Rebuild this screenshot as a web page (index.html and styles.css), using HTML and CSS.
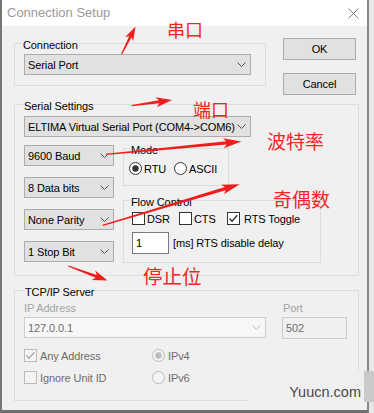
FILE: index.html
```html
<!DOCTYPE html>
<html>
<head>
<meta charset="utf-8">
<title>Connection Setup</title>
<link rel="stylesheet" href="styles.css">
</head>
<body>
<div class="win">
  <div class="titlebar">
    <span class="title">Connection Setup</span>
    <svg class="close" width="11" height="11" viewBox="0 0 11 11"><path d="M0.5 0.5L10.5 10.5M10.5 0.5L0.5 10.5" stroke="#7a7a7a" stroke-width="1" fill="none"/></svg>
  </div>
  <div class="client">
    <div class="toprow">
      <fieldset class="grp g-conn">
        <legend>Connection</legend>
        <div class="inner">
          <div class="combo w-conn"><span>Serial Port</span><svg class="chev" width="9" height="5" viewBox="0 0 9 5"><path d="M0.5 0.5L4.5 4.5L8.5 0.5" fill="none" stroke="#505050"/></svg></div>
        </div>
      </fieldset>
      <div class="btns">
        <div class="btn">OK</div>
        <div class="btn">Cancel</div>
      </div>
    </div>

    <fieldset class="grp g-serial">
      <legend>Serial Settings</legend>
      <div class="inner">
        <div class="combo w-port"><span>ELTIMA Virtual Serial Port (COM4-&gt;COM6)</span><svg class="chev" width="9" height="5" viewBox="0 0 9 5"><path d="M0.5 0.5L4.5 4.5L8.5 0.5" fill="none" stroke="#505050"/></svg></div>
        <div class="serial-row">
          <div class="smallcol">
            <div class="combo w-small"><span>9600 Baud</span><svg class="chev" width="9" height="5" viewBox="0 0 9 5"><path d="M0.5 0.5L4.5 4.5L8.5 0.5" fill="none" stroke="#505050"/></svg></div>
            <div class="combo w-small"><span>8 Data bits</span><svg class="chev" width="9" height="5" viewBox="0 0 9 5"><path d="M0.5 0.5L4.5 4.5L8.5 0.5" fill="none" stroke="#505050"/></svg></div>
            <div class="combo w-small"><span>None Parity</span><svg class="chev" width="9" height="5" viewBox="0 0 9 5"><path d="M0.5 0.5L4.5 4.5L8.5 0.5" fill="none" stroke="#505050"/></svg></div>
            <div class="combo w-small"><span>1 Stop Bit</span><svg class="chev" width="9" height="5" viewBox="0 0 9 5"><path d="M0.5 0.5L4.5 4.5L8.5 0.5" fill="none" stroke="#505050"/></svg></div>
          </div>
          <div class="rightcol">
            <fieldset class="grp g-mode">
              <legend>Mode</legend>
              <div class="inner">
                <div class="opt rtu"><svg class="rb" width="13" height="13" viewBox="0 0 13 13"><circle cx="6.5" cy="6.5" r="6" fill="#fff" stroke="#333"/><circle cx="6.5" cy="6.5" r="3.2" fill="#333"/></svg><span>RTU</span></div>
                <div class="opt"><svg class="rb" width="13" height="13" viewBox="0 0 13 13"><circle cx="6.5" cy="6.5" r="6" fill="#fff" stroke="#333"/></svg><span>ASCII</span></div>
              </div>
            </fieldset>
            <fieldset class="grp g-flow">
              <legend>Flow Control</legend>
              <div class="inner">
                <div class="checks">
                  <div class="opt dsr"><span class="box"></span><span>DSR</span></div>
                  <div class="opt cts"><span class="box"></span><span>CTS</span></div>
                  <div class="opt"><svg class="cb" width="13" height="13" viewBox="0 0 13 13"><rect x="0.5" y="0.5" width="12" height="12" fill="#fff" stroke="#333"/><path d="M2.5 6.5L5 9.2L10.3 3.3" fill="none" stroke="#333" stroke-width="1.3"/></svg><span>RTS Toggle</span></div>
                </div>
                <div class="delay">
                  <div class="edit">1</div>
                  <span>[ms] RTS disable delay</span>
                </div>
              </div>
            </fieldset>
          </div>
        </div>
      </div>
    </fieldset>

    <fieldset class="grp g-tcp">
      <legend>TCP/IP Server</legend>
      <div class="inner">
        <div class="iprow">
          <div class="ipcol">
            <div class="lbl">IP Address</div>
            <div class="combo dis w-ip"><span>127.0.0.1</span><svg class="chev" width="9" height="5" viewBox="0 0 9 5"><path d="M0.5 0.5L4.5 4.5L8.5 0.5" fill="none" stroke="#bdbdbd"/></svg></div>
          </div>
          <div class="portcol">
            <div class="lbl plbl">Port</div>
            <div class="port">502</div>
          </div>
        </div>
        <div class="opts">
          <div class="opt dis"><svg class="cb" width="13" height="13" viewBox="0 0 13 13"><rect x="0.5" y="0.5" width="12" height="12" fill="#f4f4f4" stroke="#bcbcbc"/><path d="M2.5 6.5L5 9.2L10.3 3.3" fill="none" stroke="#a8a8a8" stroke-width="1.3"/></svg><span>Any Address</span></div>
          <div class="opt dis"><svg class="rb" width="13" height="13" viewBox="0 0 13 13"><circle cx="6.5" cy="6.5" r="6" fill="#f4f4f4" stroke="#bcbcbc"/><circle cx="6.5" cy="6.5" r="3.2" fill="#bcbcbc"/></svg><span>IPv4</span></div>
          <div class="opt dis"><svg class="cb" width="13" height="13" viewBox="0 0 13 13"><rect x="0.5" y="0.5" width="12" height="12" fill="#f4f4f4" stroke="#bcbcbc"/></svg><span>Ignore Unit ID</span></div>
          <div class="opt dis"><svg class="rb" width="13" height="13" viewBox="0 0 13 13"><circle cx="6.5" cy="6.5" r="6" fill="#f4f4f4" stroke="#bcbcbc"/></svg><span>IPv6</span></div>
        </div>
      </div>
    </fieldset>
  </div>
</div>

<svg class="annot" width="374" height="413" viewBox="0 0 374 413">
  <g fill="#f31c1c">
    <g transform="translate(135.5 26.5) rotate(-63.3)"><polygon points="0,0 -14,-4.5 -11.5,-1.3 -30.8,-0.6 -30.8,0.6 -11.5,1.3 -14,4.5"/></g>
    <g transform="translate(172 100) rotate(-8)"><polygon points="0,0 -16,-5 -13,-1.5 -40.7,-0.6 -40.7,0.6 -13,1.5 -16,5"/></g>
    <g transform="translate(241.3 141.5) rotate(-5.4)"><polygon points="0,0 -18,-5 -15,-1.6 -135.9,-0.6 -135.9,0.6 -15,1.6 -18,5"/></g>
    <g transform="translate(239.7 184.3) rotate(-16.7)"><polygon points="0,0 -18,-5 -15,-1.6 -143.1,-0.6 -143.1,0.6 -15,1.6 -18,5"/></g>
    <g transform="translate(107.5 280.5) rotate(20.3)"><polygon points="0,0 -15,-5 -12,-1.5 -41.8,-0.6 -41.8,0.6 -12,1.5 -15,5"/></g>
  </g>
  <text class="cn" x="167" y="37" font-size="18">串口</text>
  <text class="cn" x="193" y="116.5" font-size="18">端口</text>
  <text class="cn" x="267" y="148.5" font-size="19">波特率</text>
  <text class="cn" x="273" y="207" font-size="19">奇偶数</text>
  <text class="cn" x="143" y="284" font-size="19.5">停止位</text>
</svg>

<div class="wm"><span>Yuucn.com</span></div>
</body>
</html>
```

FILE: styles.css
```css
* { box-sizing: border-box; }
html, body { margin: 0; padding: 0; }
body {
  width: 374px;
  height: 413px;
  overflow: hidden;
  position: relative;
  background: #e7e7e7;
  font-family: "Liberation Sans", Arial, sans-serif;
  font-size: 11px;
  color: #000;
}
.win {
  width: 369px;
  height: 413px;
  border-left: 2px solid #767676;
  border-right: 2px solid #878787;
  border-bottom: 3px solid #6e6e6e;
  background: #f0f0f0;
  display: flex;
  flex-direction: column;
}
.titlebar {
  flex: none;
  height: 26px;
  background: #fff;
  display: flex;
  align-items: center;
  justify-content: space-between;
  padding: 0 8px 0 5px;
}
.title { font-size: 13px; line-height: 26px; color: #9a9a9a; }
.close { display: block; margin-top: 1px; }

.client {
  flex: 1;
  padding-left: 12px;
  display: flex;
  flex-direction: column;
  align-items: flex-start;
  letter-spacing: -0.1px;
}

.grp {
  margin: 0;
  padding: 0;
  border: 1px solid #dcdcdc;
  min-width: 0;
}
.grp legend {
  padding: 4px 1px 0;
  line-height: 12px;
  font-size: 11px;
}

.toprow { display: flex; align-items: flex-start; }
.g-conn { width: 252px; margin-top: 9px; }
.g-conn legend { margin-left: 7px; }
.g-conn .inner { padding: 3px 0 10px 9px; }

.btns {
  margin-left: 17px;
  margin-top: 12px;
  display: flex;
  flex-direction: column;
  gap: 13px;
}
.btn {
  width: 73px;
  height: 22px;
  background: #e1e1e1;
  border: 1px solid #adadad;
  display: flex;
  align-items: center;
  justify-content: center;
}

.combo {
  height: 21px;
  background: #e1e1e1;
  border: 1px solid #adadad;
  display: flex;
  align-items: center;
  justify-content: space-between;
  padding: 0 4px 0 3px;
  white-space: nowrap;
}
.chev { flex: none; display: block; }
.w-conn { width: 227px; }
.w-port { width: 227px; }
.w-small { width: 90px; }
.w-ip { width: 242px; }
.combo.dis { background: #f7f7f7; border-color: #cccccc; color: #6d6d6d; }

.g-serial { width: 345px; margin-top: 1px; }
.g-serial legend { margin-left: 8px; }
.g-serial .inner { padding: 4px 0 12px 9px; }

.serial-row { display: flex; align-items: flex-start; gap: 9px; margin-top: 3px; }
.smallcol { display: flex; flex-direction: column; gap: 11px; margin-top: 5px; }
.rightcol { display: flex; flex-direction: column; gap: 6px; }

.g-mode { width: 106px; }
.g-mode legend { margin-left: 6px; }
.g-mode .inner { padding: 6px 0 10px 5px; display: flex; }
.g-mode .rtu { width: 45px; }

.g-flow { width: 198px; }
.g-flow legend { margin-left: 6px; }
.g-flow .inner { padding: 4px 0 8px 8px; }

.opt { display: flex; align-items: center; gap: 2px; height: 13px; white-space: nowrap; }
.rb, .cb { display: block; flex: none; }
.box {
  display: block;
  flex: none;
  width: 13px;
  height: 13px;
  border: 1px solid #333;
  background: #fff;
}
.checks { display: flex; }
.checks .dsr { width: 47px; }
.checks .cts { width: 48px; }
.checks .opt:last-child { gap: 4px; }

.delay { display: flex; align-items: center; gap: 4px; margin-top: 7px; }
.edit {
  width: 37px;
  height: 22px;
  border: 1px solid #7a7a7a;
  background: #fff;
  padding-left: 3px;
  line-height: 20px;
}

.g-tcp { width: 345px; margin-top: 6px; }
.g-tcp legend { margin-left: 9px; }
.g-tcp .inner { padding: 4px 0 16px 9px; }
.iprow { display: flex; gap: 16px; }
.lbl { line-height: 13px; color: #a3a3a3; margin-bottom: 2px; }
.plbl { padding-left: 1px; }
.port {
  width: 65px;
  height: 22px;
  border: 1px solid #cccccc;
  background: #f0f0f0;
  color: #6d6d6d;
  padding-left: 3px;
  line-height: 20px;
}
.opts {
  display: grid;
  grid-template-columns: 128px auto;
  row-gap: 9px;
  margin-top: 10px;
}
.opt.dis { color: #6d6d6d; gap: 3px; }

.annot { position: absolute; left: 0; top: 0; pointer-events: none; }
.cn { font-family: "Noto Sans CJK SC", sans-serif; fill: #f32424; }

.wm {
  position: absolute;
  left: 249px;
  top: 371px;
  width: 125px;
  height: 31px;
  background: #efefef;
  text-align: right;
  padding: 13px 13px 0 0;
}
.wm span { font-size: 14.5px; line-height: 17px; color: #4a4a4a; }
.wm::after {
  content: "";
  position: absolute;
  right: 0;
  top: 0;
  width: 10px;
  height: 100%;
  background: #cacaca;
}
```
